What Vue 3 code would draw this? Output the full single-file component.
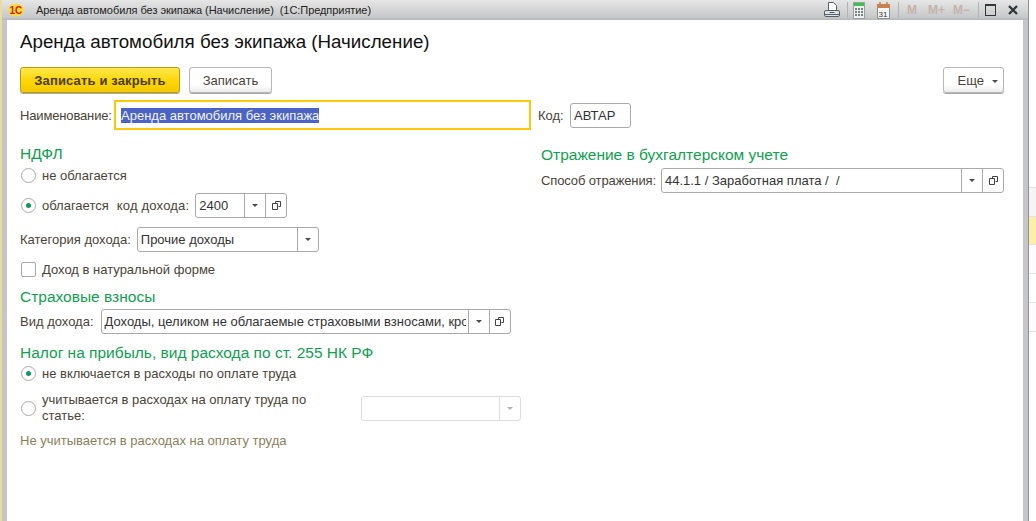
<script setup>
const memButtons = [
  { label: 'M', cls: 'm1' },
  { label: 'M+', cls: 'm2' },
  { label: 'M−', cls: 'm3' },
]
</script>

<template>
  <div class="desk">
    <div class="edge-left"></div>
    <div class="window">
      <header class="titlebar">
        <svg class="logo" width="16" height="14" viewBox="0 0 16 14">
          <ellipse cx="8" cy="7" rx="8" ry="6.5" fill="#fbdc3c" />
          <text x="1.5" y="10.5" class="logo-text">1С</text>
        </svg>
        <span class="title-text">Аренда автомобиля без экипажа (Начисление)&nbsp; (1С:Предприятие)</span>
        <div class="tools">
          <svg class="t-print" width="16" height="16" viewBox="0 0 16 16" fill="none" stroke="#55606a">
            <path d="M4.5 0.5h5l3 3v5h-8z" fill="#fff" />
            <rect x="0.5" y="8.5" width="15" height="6" rx="1.5" fill="#dfe3e6" />
            <path d="M5.5 10.5h5M1 12.5h14" />
          </svg>
          <i class="sep s-a"></i>
          <svg class="t-calc" width="12" height="17" viewBox="0 0 12 17">
            <rect x="0.5" y="0.5" width="11" height="16" fill="#eef0f0" stroke="#9aa0a4" />
            <rect x="1" y="1" width="10" height="3" fill="#3fbf4d" />
            <path d="M2 6h2v2H2zM5 6h2v2H5zM8 6h2v2H8zM2 9h2v2H2zM5 9h2v2H5zM8 9h2v2H8zM2 12h2v2H2zM5 12h2v2H5zM8 12h2v2H8z" fill="#7a8084" />
          </svg>
          <svg class="t-cal" width="13" height="17" viewBox="0 0 13 17">
            <rect x="0.5" y="2.5" width="12" height="14" fill="#f6f6f6" stroke="#8a8f92" />
            <rect x="0" y="2" width="13" height="4" fill="#c9824f" />
            <path d="M3 0v3M10 0v3" stroke="#c9824f" stroke-width="1.5" />
            <text x="1.5" y="14.5" class="cal-text">31</text>
          </svg>
          <i class="sep s-b"></i>
          <span v-for="m in memButtons" :key="m.label" class="mem" :class="m.cls">{{ m.label }}</span>
          <i class="sep s-c"></i>
          <span class="maximize"></span>
          <svg class="close" width="10" height="10" viewBox="0 0 10 10">
            <path d="M1 1l8 8M9 1l-8 8" stroke="#30373c" stroke-width="2.4" />
          </svg>
        </div>
      </header>

      <main class="form">
        <h1 class="page-title">Аренда автомобиля без экипажа (Начисление)</h1>

        <div class="actions">
          <button class="btn primary">Записать и закрыть</button>
          <button class="btn">Записать</button>
          <button class="btn more">Еще <i class="caret"></i></button>
        </div>

        <div class="name-row">
          <span class="label name-label">Наименование:</span>
          <div class="name-input"><span class="selected">Аренда автомобиля без экипажа</span></div>
          <span class="label code-label">Код:</span>
          <div class="field code-field"><span class="value">АВТАР</span></div>
        </div>

        <div class="columns">
          <section class="col-left">
            <h2 class="group first">НДФЛ</h2>
            <label class="row r-a"><i class="radio"></i><span>не облагается</span></label>
            <label class="row r-b">
              <i class="radio on"></i><span>облагается</span>
              <span class="income-code">код дохода:</span>
              <div class="field f-code">
                <span class="value">2400</span>
                <span class="cell"><i class="caret"></i></span>
                <span class="cell">
                  <svg width="9" height="9" viewBox="0 0 9 9" fill="none" stroke="#444"><path d="M3.5 2.5V0.5h5v5H6.5M0.5 2.5h5v6h-5z" /></svg>
                </span>
              </div>
            </label>
            <div class="row r-c">
              <span class="label">Категория дохода:</span>
              <div class="field f-cat">
                <span class="value">Прочие доходы</span>
                <span class="cell"><i class="caret"></i></span>
              </div>
            </div>
            <label class="row r-d"><i class="check"></i><span>Доход в натуральной форме</span></label>

            <h2 class="group g2">Страховые взносы</h2>
            <div class="row r-e">
              <span class="label">Вид дохода:</span>
              <div class="field f-kind">
                <span class="value">Доходы, целиком не облагаемые страховыми взносами, кро</span>
                <span class="cell"><i class="caret"></i></span>
                <span class="cell">
                  <svg width="9" height="9" viewBox="0 0 9 9" fill="none" stroke="#444"><path d="M3.5 2.5V0.5h5v5H6.5M0.5 2.5h5v6h-5z" /></svg>
                </span>
              </div>
            </div>

            <h2 class="group g3">Налог на прибыль, вид расхода по ст. 255 НК РФ</h2>
            <label class="row r-f"><i class="radio on"></i><span>не включается в расходы по оплате труда</span></label>
            <div class="row r-g">
              <i class="radio"></i>
              <span class="wrap-label">учитывается в расходах на оплату труда по статье:</span>
              <div class="field f-off">
                <span class="value"></span>
                <span class="cell"><i class="caret"></i></span>
              </div>
            </div>
            <p class="note">Не учитывается в расходах на оплату труда</p>
          </section>

          <section class="col-right">
            <h2 class="group first">Отражение в бухгалтерском учете</h2>
            <div class="row r-h">
              <span class="label way-label">Способ отражения:</span>
              <div class="field f-way">
                <span class="value">44.1.1 / Заработная плата /&nbsp; /</span>
                <span class="cell"><i class="caret"></i></span>
                <span class="cell">
                  <svg width="9" height="9" viewBox="0 0 9 9" fill="none" stroke="#444"><path d="M3.5 2.5V0.5h5v5H6.5M0.5 2.5h5v6h-5z" /></svg>
                </span>
              </div>
            </div>
          </section>
        </div>
      </main>
    </div>
    <div class="edge-right">
      <i class="stripe s0"></i>
      <i class="stripe s1"></i>
      <i class="stripe s2"></i>
      <i class="stripe s3"></i>
      <i class="stripe s4"></i>
      <i class="stripe s5"></i>
    </div>
  </div>
</template>

<style>
html, body { margin: 0; background: #fff; overflow: hidden; }
</style>

<style scoped>
.desk {
  display: flex;
  width: 1036px;
  height: 521px;
  font-family: "Liberation Sans", Arial, sans-serif;
  font-size: 13px;
  color: #4a4438;
  overflow: hidden;
}
.edge-left { width: 2px; background: #e9dc9c; }
.window {
  width: 1026px;
  box-sizing: border-box;
  border-left: 5px solid #c4c6ca;
  border-right: 5px solid #c4c6ca;
  display: flex;
  flex-direction: column;
  background: #fff;
}
.edge-right { flex: 1; display: flex; flex-direction: column; background: #fff; border-left: 1px solid #8e9092; }
.stripe { display: block; border-bottom: 1px solid #e2e2e2; height: 28px; background: #fdfbfd; }
.s0 { height: 187px; background: #fff; }
.s1 { background: #f7f4f6; }
.s2 { background: #fdf0a6; height: 27px; }
.s4 { background: #fff; }

.titlebar {
  height: 20px;
  margin: 0 -5px;
  padding-left: 6px;
  display: flex;
  align-items: center;
  background: linear-gradient(#e6e6e6, #c8c9ca 85%, #b4b6b8);
  flex: none;
}
.logo { flex: none; }
.logo-text { font: bold 10px "Liberation Sans", sans-serif; fill: #d8200f; }
.title-text { margin-left: 12px; font-size: 11px; color: #222; white-space: nowrap; letter-spacing: -0.06px; }
.tools { margin-left: auto; display: flex; align-items: center; height: 20px; padding-right: 10px; }
.sep { width: 1px; height: 16px; background: #b2b4b6; flex: none; }
.t-print, .t-calc, .t-cal { flex: none; }
.s-a { margin-left: 7px; }
.t-calc { margin-left: 5px; }
.t-cal { margin-left: 12px; }
.s-b { margin-left: 8px; }
.m1 { margin-left: 8px; }
.m2 { margin-left: 11px; }
.m3 { margin-left: 8px; }
.s-c { margin-left: 8px; }
.cal-text { font: 8px "Liberation Sans", sans-serif; fill: #333; }
.mem { font-size: 12px; font-weight: bold; color: #c3b4ac; white-space: nowrap; }
.maximize { height: 9px; width: 9px; margin-left: 6px; border: 1px solid #30373c; border-top-width: 2px; }
.close { margin-left: 12px; flex: none; }

.form { padding: 0 19px 0 13px; flex: 1; }
.page-title {
  margin: 0;
  padding-top: 11px;
  font-size: 18.75px;
  line-height: 21px;
  font-weight: normal;
  color: #111;
}
.actions { display: flex; gap: 9px; margin-top: 15px; height: 26px; }
.btn {
  height: 26px;
  box-sizing: border-box;
  padding: 0;
  width: 83px;
  border: 1px solid #b6b6b6;
  border-radius: 3px;
  background: linear-gradient(#fff, #fff 70%, #ececec);
  font: 13px "Liberation Sans", sans-serif;
  color: #4a4438;
  box-shadow: 0 1px 0 #a9a9a9;
}
.primary {
  width: 160px;
  border-color: #b89b10;
  background: linear-gradient(#ffe84e, #fdd400 60%, #f3c900);
  font-weight: bold;
  color: #4a3c00;
  letter-spacing: 0.15px;
}
.more { margin-left: auto; width: 61px; padding-left: 8px; }
.caret {
  display: inline-block;
  width: 0;
  height: 0;
  border: 3px solid transparent;
  border-top: 3px solid #4a4a4a;
  border-bottom: 0;
  vertical-align: middle;
  margin-left: 4px;
}
.name-row { display: flex; align-items: center; height: 30px; margin-top: 7px; }
.label { white-space: nowrap; }
.name-label { width: 94px; flex: none; letter-spacing: -0.15px; }
.name-input {
  width: 417px;
  height: 30px;
  box-sizing: border-box;
  border: 2px solid #fbc90a;
  display: flex;
  align-items: center;
  padding-left: 5px;
  flex: none;
}
.selected { background: #4a63c4; color: #f4f4ff; line-height: 15px; }
.code-label { margin-left: 7px; width: 32px; flex: none; }
.field {
  display: flex;
  align-items: stretch;
  height: 25px;
  box-sizing: border-box;
  border: 1px solid #a9a9a9;
  border-radius: 3px;
  background: #fff;
  flex: none;
}
.value {
  flex: 1;
  min-width: 0;
  padding-left: 3px;
  margin-right: 2px;
  line-height: 23px;
  color: #333;
  white-space: nowrap;
  overflow: hidden;
}
.code-field { width: 61px; }
.cell {
  width: 20px;
  border-left: 1px solid #a9a9a9;
  display: flex;
  align-items: center;
  justify-content: center;
  flex: none;
}
.cell .caret { margin: 0; }
.columns { display: grid; grid-template-columns: 501px 463px; column-gap: 20px; }
.group {
  margin: 0;
  font-size: 15.5px;
  font-weight: normal;
  line-height: 18px;
  color: #10a050;
}
.first { margin-top: 15px; }
.col-right .first { margin-top: 16px; }
.row { display: flex; align-items: center; }
.radio {
  flex: none;
  width: 15px;
  height: 15px;
  box-sizing: border-box;
  border: 1px solid #a9a9a9;
  border-radius: 50%;
  background: #fff;
  margin-right: 6px;
  position: relative;
}
.radio.on::after {
  content: "";
  position: absolute;
  left: 4px;
  top: 4px;
  width: 5px;
  height: 5px;
  border-radius: 50%;
  background: #10985a;
}
.check {
  flex: none;
  width: 15px;
  height: 15px;
  box-sizing: border-box;
  border: 1px solid #a9a9a9;
  border-radius: 2px;
  margin: 0 6px 0 1px;
}
.r-a { height: 20px; margin-top: 2px; padding-left: 1px; }
.r-b { height: 25px; margin-top: 8px; padding-left: 1px; }
.income-code { margin-left: 8px; letter-spacing: 0.2px; }
.f-code { margin-left: 6px; width: 92px; }
.r-c { height: 25px; margin-top: 9px; }
.f-cat { margin-left: 6px; width: 182px; }
.r-d { height: 18px; margin-top: 8px; }
.g2 { margin-top: 10px; }
.r-e { height: 25px; margin-top: 3px; }
.f-kind { margin-left: 7px; width: 410px; }
.g3 { margin-top: 10px; }
.r-f { height: 18px; margin-top: 2px; padding-left: 1px; }
.r-g { height: 30px; margin-top: 11px; padding-left: 1px; }
.wrap-label { width: 290px; padding-right: 22px; box-sizing: border-box; line-height: 16px; }
.f-off { margin-left: 29px; width: 160px; border-color: #dcdcdc; }
.f-off .cell { border-left-color: #dcdcdc; }
.f-off .caret { border-top-color: #b5b5b5; }
.note { margin: 10px 0 0; line-height: 16px; color: #8a7f5c; }
.r-h { height: 25px; margin-top: 4px; }
.way-label { letter-spacing: -0.12px; }
.f-way { margin-left: 5px; flex: 1; min-width: 0; }
</style>
